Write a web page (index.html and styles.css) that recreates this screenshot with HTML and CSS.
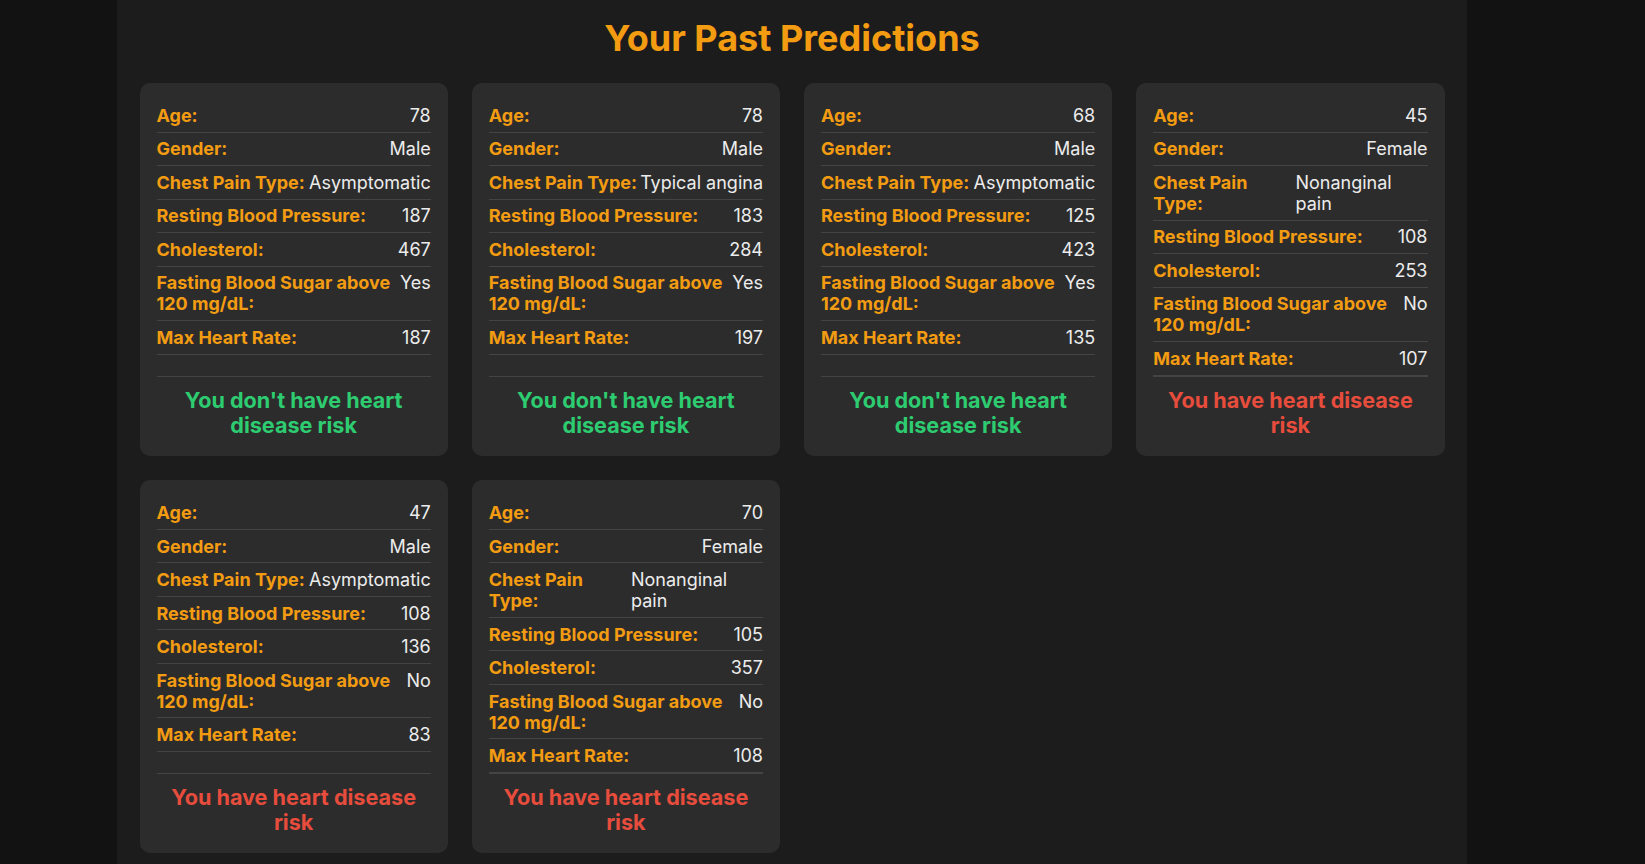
FILE: index.html
```html
<!DOCTYPE html>
<html lang="en">
<head>
<meta charset="utf-8">
<title>Your Past Predictions</title>
<link rel="stylesheet" href="styles.css">
</head>
<body>
<main class="page">
  <h2 class="title">Your Past Predictions</h2>
  <div class="grid">
    <div class="card">
      <div class="row"><span class="label">Age:</span><span class="value">78</span></div>
      <div class="row"><span class="label">Gender:</span><span class="value">Male</span></div>
      <div class="row"><span class="label">Chest Pain Type:</span><span class="value">Asymptomatic</span></div>
      <div class="row"><span class="label">Resting Blood Pressure:</span><span class="value">187</span></div>
      <div class="row"><span class="label">Cholesterol:</span><span class="value">467</span></div>
      <div class="row"><span class="label">Fasting Blood Sugar above 120 mg/dL:</span><span class="value">Yes</span></div>
      <div class="row"><span class="label">Max Heart Rate:</span><span class="value">187</span></div>
      <div class="result safe">You don't have heart disease risk</div>
    </div>
    <div class="card">
      <div class="row"><span class="label">Age:</span><span class="value">78</span></div>
      <div class="row"><span class="label">Gender:</span><span class="value">Male</span></div>
      <div class="row"><span class="label">Chest Pain Type:</span><span class="value">Typical angina</span></div>
      <div class="row"><span class="label">Resting Blood Pressure:</span><span class="value">183</span></div>
      <div class="row"><span class="label">Cholesterol:</span><span class="value">284</span></div>
      <div class="row"><span class="label">Fasting Blood Sugar above 120 mg/dL:</span><span class="value">Yes</span></div>
      <div class="row"><span class="label">Max Heart Rate:</span><span class="value">197</span></div>
      <div class="result safe">You don't have heart disease risk</div>
    </div>
    <div class="card">
      <div class="row"><span class="label">Age:</span><span class="value">68</span></div>
      <div class="row"><span class="label">Gender:</span><span class="value">Male</span></div>
      <div class="row"><span class="label">Chest Pain Type:</span><span class="value">Asymptomatic</span></div>
      <div class="row"><span class="label">Resting Blood Pressure:</span><span class="value">125</span></div>
      <div class="row"><span class="label">Cholesterol:</span><span class="value">423</span></div>
      <div class="row"><span class="label">Fasting Blood Sugar above 120 mg/dL:</span><span class="value">Yes</span></div>
      <div class="row"><span class="label">Max Heart Rate:</span><span class="value">135</span></div>
      <div class="result safe">You don't have heart disease risk</div>
    </div>
    <div class="card">
      <div class="row"><span class="label">Age:</span><span class="value">45</span></div>
      <div class="row"><span class="label">Gender:</span><span class="value">Female</span></div>
      <div class="row"><span class="label">Chest Pain Type:</span><span class="value">Nonanginal pain</span></div>
      <div class="row"><span class="label">Resting Blood Pressure:</span><span class="value">108</span></div>
      <div class="row"><span class="label">Cholesterol:</span><span class="value">253</span></div>
      <div class="row"><span class="label">Fasting Blood Sugar above 120 mg/dL:</span><span class="value">No</span></div>
      <div class="row"><span class="label">Max Heart Rate:</span><span class="value">107</span></div>
      <div class="result risk">You have heart disease risk</div>
    </div>
    <div class="card">
      <div class="row"><span class="label">Age:</span><span class="value">47</span></div>
      <div class="row"><span class="label">Gender:</span><span class="value">Male</span></div>
      <div class="row"><span class="label">Chest Pain Type:</span><span class="value">Asymptomatic</span></div>
      <div class="row"><span class="label">Resting Blood Pressure:</span><span class="value">108</span></div>
      <div class="row"><span class="label">Cholesterol:</span><span class="value">136</span></div>
      <div class="row"><span class="label">Fasting Blood Sugar above 120 mg/dL:</span><span class="value">No</span></div>
      <div class="row"><span class="label">Max Heart Rate:</span><span class="value">83</span></div>
      <div class="result risk">You have heart disease risk</div>
    </div>
    <div class="card">
      <div class="row"><span class="label">Age:</span><span class="value">70</span></div>
      <div class="row"><span class="label">Gender:</span><span class="value">Female</span></div>
      <div class="row"><span class="label">Chest Pain Type:</span><span class="value">Nonanginal pain</span></div>
      <div class="row"><span class="label">Resting Blood Pressure:</span><span class="value">105</span></div>
      <div class="row"><span class="label">Cholesterol:</span><span class="value">357</span></div>
      <div class="row"><span class="label">Fasting Blood Sugar above 120 mg/dL:</span><span class="value">No</span></div>
      <div class="row"><span class="label">Max Heart Rate:</span><span class="value">108</span></div>
      <div class="result risk">You have heart disease risk</div>
    </div>
  </div>
</main>
</body>
</html>
```
FILE: styles.css
```css
* { box-sizing: border-box; }

html, body {
  margin: 0;
  padding: 0;
  background: #121212;
  font-family: Inter, "Noto Sans", "Liberation Sans", sans-serif;
  color: #ececec;
}

.page {
  width: 1350px;
  margin-left: 117px;
  min-height: 100vh;
  background: #1c1c1c;
  padding: 17px 22.5px 4px;
}

.title {
  margin: 0 0 22px;
  font-size: 36px;
  font-weight: 700;
  line-height: 1.21;
  color: #f39c12;
  text-align: center;
}

.grid {
  display: grid;
  grid-template-columns: repeat(4, 1fr);
  gap: 24px;
}

.card {
  display: flex;
  flex-direction: column;
  background: #2c2c2c;
  border-radius: 10px;
  padding: 16.5px 17px 17.3px;
}

.row {
  display: flex;
  justify-content: space-between;
  padding: 5.75px 0;
  border-bottom: 1px solid #444;
  font-size: 18px;
  line-height: 21px;
}

.label {
  font-weight: 700;
  color: #f39c12;
}

.value {
  font-weight: 400;
  color: #ececec;
}

.result {
  margin-top: auto;
  border-top: 1px solid #444;
  padding-top: 11.5px;
  font-size: 21.6px;
  line-height: 25.2px;
  font-weight: 700;
  text-align: center;
}

.safe { color: #2ecc71; }
.risk { color: #e74c3c; }
```
